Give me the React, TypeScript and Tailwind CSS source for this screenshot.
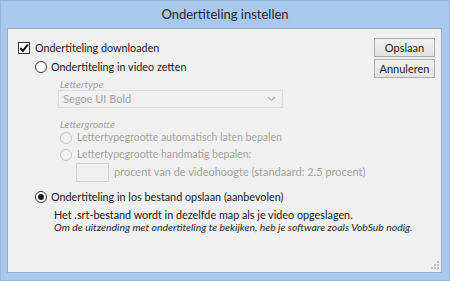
import React from 'react';

const font = { fontFamily: 'Lato, "Open Sans", sans-serif' };

function Radio({ checked, disabled }: { checked?: boolean; disabled?: boolean }) {
  return (
    <span
      className={`w-[12px] h-[12px] rounded-full border shrink-0 flex items-center justify-center ${
        disabled ? 'border-[#c8c8c8] bg-[#f0f0f0]' : 'border-[#333] bg-white'
      }`}
    >
      {checked && <span className="w-[6px] h-[6px] rounded-full bg-[#1a1a1a]" />}
    </span>
  );
}

function Checkbox() {
  return (
    <span className="w-[12px] h-[12px] border border-[#333] bg-white shrink-0 flex items-center justify-center">
      <svg width="10" height="10" viewBox="0 0 10 10">
        <path d="M1.3 5 L3.9 7.9 L8.8 1.6" fill="none" stroke="#111" strokeWidth="1.9" />
      </svg>
    </span>
  );
}

function Button({ label }: { label: string }) {
  return (
    <button className="w-[61px] h-[19px] border border-[#acacac] bg-gradient-to-b from-[#f2f2f2] to-[#e3e3e3] text-[11px] text-[#1e1e1e] leading-none">
      {label}
    </button>
  );
}

export default function App() {
  return (
    <div
      className="w-[450px] h-[281px] bg-[#a9c8ea] border border-[#95b6dd] flex flex-col overflow-hidden"
      style={font}
    >
      {/* ─── Title ─── */}
      <div className="h-[27px] shrink-0 flex items-center justify-center text-[13px] text-[#1e2a3a]">
        Ondertiteling instellen
      </div>

      {/* ─── Body ─── */}
      <div className="ml-[6px] mr-[7px] h-[245px] border border-[#8fb0d6] bg-[#f0f0f0] relative flex text-[10.8px] text-[#1a1a1a] whitespace-nowrap">
        <div className="flex-1 min-w-0 pl-[10px] pt-[11px]">
          <div className="flex items-center gap-[5px] h-[16px]">
            <Checkbox />
            <span>Ondertiteling downloaden</span>
          </div>

          <div className="pl-[17px] mt-[3px]">
            <div className="flex items-center gap-[4px] h-[16px]">
              <Radio />
              <span>Ondertiteling in video zetten</span>
            </div>

            <div className="pl-[23px] text-[#a4a4a4] text-[10.5px]">
              <div className="italic text-[10.3px] leading-[12px] mt-[3px] pl-[2px]">Lettertype</div>
              <div className="w-[225px] h-[18px] border border-[#dcdcdc] bg-[#f0f0f0] flex items-center justify-between pl-[4px] pr-[6px]">
                <span className="text-[11px]">Segoe UI Bold</span>
                <svg width="9" height="6" viewBox="0 0 9 6">
                  <path d="M1 1 L4.5 4.5 L8 1" fill="none" stroke="#b4b4b4" strokeWidth="1.2" />
                </svg>
              </div>

              <div className="italic text-[10.3px] mt-[11px] leading-[11px] pl-[2px]">Lettergrootte</div>
              <div className="flex items-center gap-[5px] h-[16px] pl-[2px]">
                <Radio disabled />
                <span>Lettertypegrootte automatisch laten bepalen</span>
              </div>
              <div className="flex items-center gap-[5px] h-[17px] pl-[2px]">
                <Radio disabled />
                <span>Lettertypegrootte handmatig bepalen:</span>
              </div>
              <div className="flex items-center gap-[5px] pl-[18px]">
                <div className="w-[33px] h-[19px] shrink-0 border border-[#d4d4d4] bg-[#f0f0f0]" />
                <span className="text-[11px]">procent van de videohoogte (standaard: 2.5 procent)</span>
              </div>
            </div>

            <div className="flex items-center gap-[4px] h-[16px] mt-[7px]">
              <Radio checked />
              <span>Ondertiteling in los bestand opslaan (aanbevolen)</span>
            </div>
            <div className="pl-[19px] mt-[3px] leading-[13px]">
              <div>Het .srt-bestand wordt in dezelfde map als je video opgeslagen.</div>
              <div className="italic text-[10.4px] text-[#2a2a2a]">
                Om de uitzending met ondertiteling te bekijken, heb je software zoals VobSub nodig.
              </div>
            </div>
          </div>
        </div>

        {/* ─── Buttons ─── */}
        <div className="flex flex-col gap-[2px] pt-[9px] pr-[6px] shrink-0">
          <Button label="Opslaan" />
          <Button label="Annuleren" />
        </div>

        {/* resize grip */}
        <svg className="absolute right-[1px] bottom-[2px]" width="10" height="10" viewBox="0 0 10 10">
          <rect x="7" y="1" width="2" height="2" fill="#c6c6c6" />
          <rect x="4" y="4" width="2" height="2" fill="#c6c6c6" />
          <rect x="7" y="4" width="2" height="2" fill="#c6c6c6" />
          <rect x="1" y="7" width="2" height="2" fill="#c6c6c6" />
          <rect x="4" y="7" width="2" height="2" fill="#c6c6c6" />
          <rect x="7" y="7" width="2" height="2" fill="#c6c6c6" />
        </svg>
      </div>
    </div>
  );
}
